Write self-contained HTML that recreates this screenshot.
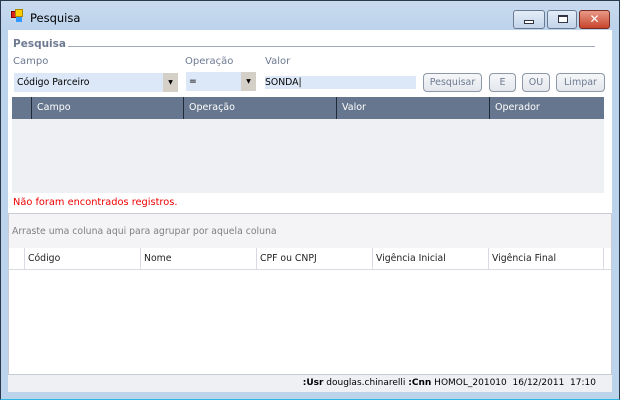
<!DOCTYPE html>
<html><head><meta charset="utf-8"><style>
*{margin:0;padding:0;box-sizing:border-box}
body{width:620px;height:400px;overflow:hidden;position:relative;font-family:"DejaVu Sans","Liberation Sans",sans-serif;font-size:9.3px;background:#bcd3ec}
.a{position:absolute}
.frame{left:0;top:0;width:620px;height:400px;border:1px solid #2a3a4c;border-bottom-color:#2bb7e0;background:linear-gradient(#c8daee,#bcd3ec 30px,#bcd3ec)}
.lbl{color:#6d7a91;font-size:10px}
.btn{border:1px solid #8d99a8;border-radius:4px;background:linear-gradient(#f6f7f9,#e3e7ec);color:#6d7a91;text-align:center;line-height:17px;font-size:9.5px}
.wb{top:10px;height:19px;border:1px solid #6b7a90;border-radius:3px;background:linear-gradient(#e4edf7,#c2d4ea)}
.hd{top:97px;height:22px;background:#66768e;color:#fff;line-height:22px;padding-left:5px;border-left:1px solid #1e2a3a;font-size:9.5px}
.gh{top:248px;height:21px;line-height:21px;padding-left:3px;border-left:1px solid #d8dce2;color:#222;background:#fff}
</style></head><body>
<div class="a frame"></div>
<div class="a" style="left:11px;top:11px;width:7px;height:7px;background:#d22;border:1px solid #800"></div>
<div class="a" style="left:15px;top:9px;width:8px;height:8px;background:#fc0;border:1px solid #a80"></div>
<div class="a" style="left:16px;top:17px;width:6px;height:5px;background:#39f"></div>
<div class="a" style="left:30px;top:11px;font-size:11.5px;color:#000">Pesquisa</div>
<div class="a wb" style="left:513px;width:32px"><div class="a" style="left:10px;top:9px;width:10px;height:4px;border:1px solid #334;background:#fff"></div></div>
<div class="a wb" style="left:547px;width:30px"><div class="a" style="left:10px;top:4px;width:10px;height:8px;border:1px solid #334;border-top-width:2px;background:#fff"></div></div>
<div class="a wb" style="left:579px;width:31px;background:linear-gradient(#e89a88,#c8442c);border-color:#7a2a20;color:#fff;text-align:center;font-weight:bold;font-size:12px;line-height:16px">✕</div>
<div class="a" style="left:8px;top:30px;width:604px;height:362px;background:#fff"></div>
<div class="a" style="left:13px;top:38px;font-weight:bold;color:#6d7a91;font-size:10.5px">Pesquisa</div>
<div class="a" style="left:68px;top:46px;width:527px;height:1px;background:#a0aabb"></div>
<div class="a lbl" style="left:13px;top:56px">Campo</div>
<div class="a lbl" style="left:185px;top:56px">Operação</div>
<div class="a lbl" style="left:265px;top:56px">Valor</div>
<div class="a" style="left:14px;top:73px;width:164px;height:19px;background:#dce8f8;padding-left:3px;line-height:19px;color:#000">Código Parceiro</div>
<div class="a" style="left:163px;top:73px;width:15px;height:19px;background:#d4d0c8;font-size:6px;text-align:center;line-height:19px">▼</div>
<div class="a" style="left:186px;top:72px;width:70px;height:19px;background:#dce8f8;padding-left:3px;line-height:19px;color:#000">=</div>
<div class="a" style="left:241px;top:72px;width:15px;height:19px;background:#d4d0c8;font-size:6px;text-align:center;line-height:19px">▼</div>
<div class="a" style="left:265px;top:76px;width:151px;height:13px;background:#dce8f8;line-height:13px;color:#000">SONDA|</div>
<div class="a btn" style="left:423px;top:73px;width:59px;height:19px">Pesquisar</div>
<div class="a btn" style="left:489px;top:73px;width:27px;height:19px">E</div>
<div class="a btn" style="left:522px;top:73px;width:28px;height:19px">OU</div>
<div class="a btn" style="left:556px;top:73px;width:49px;height:19px">Limpar</div>
<div class="a" style="left:12px;top:97px;width:592px;height:96px;background:#eef0f3"></div>
<div class="a hd" style="left:12px;width:19px;border-left:none"></div>
<div class="a hd" style="left:31px;width:152px">Campo</div>
<div class="a hd" style="left:183px;width:153px">Operação</div>
<div class="a hd" style="left:336px;width:153px">Valor</div>
<div class="a hd" style="left:489px;width:115px">Operador</div>
<div class="a" style="left:13px;top:197px;color:#e00;font-size:9.8px">Não foram encontrados registros.</div>
<div class="a" style="left:8px;top:213px;width:604px;height:162px;border:1px solid #c8ccd4;background:#fff"></div>
<div class="a" style="left:9px;top:214px;width:602px;height:34px;background:#f4f4f6"></div>
<div class="a" style="left:12px;top:226px;color:#808080">Arraste uma coluna aqui para agrupar por aquela coluna</div>
<div class="a" style="left:9px;top:248px;width:602px;height:22px;background:#fff;border-bottom:1px solid #d8dce2"></div>
<div class="a gh" style="left:24px;width:116px">Código</div>
<div class="a gh" style="left:140px;width:116px">Nome</div>
<div class="a gh" style="left:256px;width:116px">CPF ou CNPJ</div>
<div class="a gh" style="left:372px;width:116px">Vigência Inicial</div>
<div class="a gh" style="left:488px;width:116px;border-right:1px solid #d8dce2">Vigência Final</div>
<div class="a" style="left:8px;top:375px;width:604px;height:17px;background:#eef0f4"></div>
<div class="a" style="left:300px;top:378px;width:296px;text-align:right;color:#000;font-size:9px;white-space:nowrap"><b>:Usr</b> douglas.chinarelli <b>:Cnn</b> HOMOL_201010 &nbsp;16/12/2011 &nbsp;17:10</div>
</body></html>
